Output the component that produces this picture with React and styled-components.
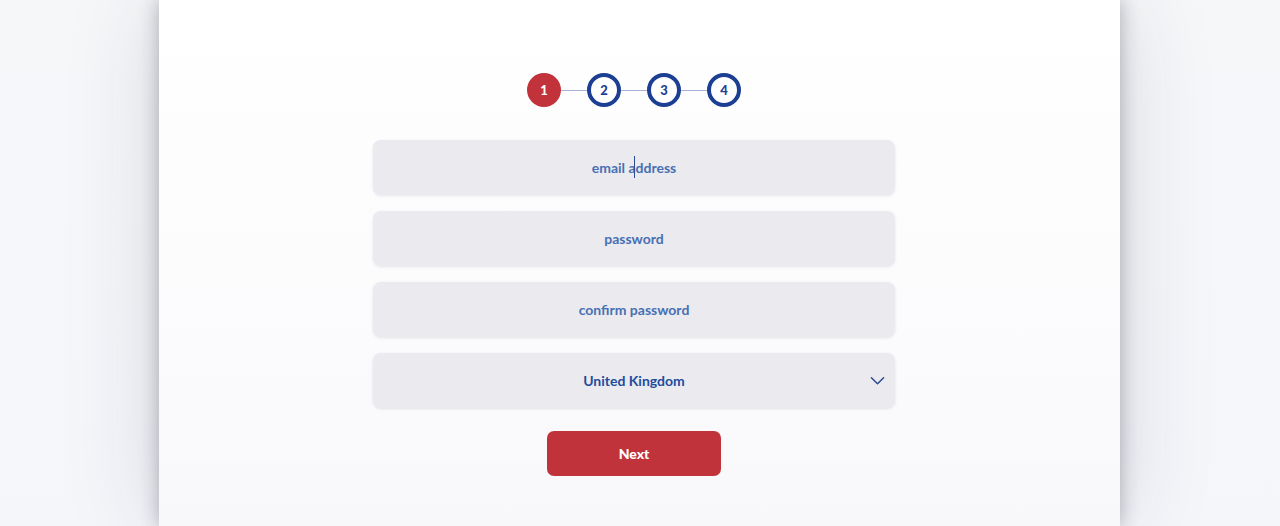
import React, { useState } from "react";
import styled, { createGlobalStyle } from "styled-components";

const GlobalStyle = createGlobalStyle`
  html, body {
    margin: 0;
    padding: 0;
    background: #f5f6f9;
    font-family: "Lato", "Noto Sans", sans-serif;
  }
  * { box-sizing: border-box; }
`;

const steps = [1, 2, 3, 4];

function App() {
  const [email, setEmail] = useState("");
  const [password, setPassword] = useState("");
  const [confirm, setConfirm] = useState("");
  const [country, setCountry] = useState("United Kingdom");

  return (
    <PageWrapper>
      <GlobalStyle />
      <Panel>
        <Content>
          <Stepper>
            {steps.map((step, i) => (
              <React.Fragment key={step}>
                {i > 0 ? <StepLine /> : null}
                <StepCircle active={step === 1}>{step}</StepCircle>
              </React.Fragment>
            ))}
          </Stepper>

          <Form onSubmit={(e) => e.preventDefault()}>
            <FieldWrap>
              <Field
                placeholder="email address"
                value={email}
                onChange={(e) => setEmail(e.target.value)}
              />
              {!email ? <Caret /> : null}
            </FieldWrap>
            <FieldWrap>
              <Field
                type="password"
                placeholder="password"
                value={password}
                onChange={(e) => setPassword(e.target.value)}
              />
            </FieldWrap>
            <FieldWrap>
              <Field
                type="password"
                placeholder="confirm password"
                value={confirm}
                onChange={(e) => setConfirm(e.target.value)}
              />
            </FieldWrap>
            <FieldWrap>
              <Select value={country} onChange={(e) => setCountry(e.target.value)}>
                <option>United Kingdom</option>
                <option>Ireland</option>
                <option>France</option>
              </Select>
              <Chevron viewBox="0 0 16 10" aria-hidden="true">
                <path d="M1.5 1.5 L8 8 L14.5 1.5" fill="none" stroke="#2a4a8f" strokeWidth="1.6" strokeLinecap="round" strokeLinejoin="round" />
              </Chevron>
            </FieldWrap>
            <NextButton type="submit">Next</NextButton>
          </Form>
        </Content>
      </Panel>
    </PageWrapper>
  );
}

const PageWrapper = styled.div`
  width: 100%;
  min-height: 526px;
  display: flex;
  justify-content: center;
  padding-right: 1px;
  overflow: hidden;
  background: linear-gradient(180deg, #f6f7f9 0%, #f5f6fa 100%);
`;

const Panel = styled.div`
  width: 961px;
  min-height: 526px;
  background: linear-gradient(180deg, #ffffff 0%, #fdfcfd 45%, #f8f8fb 100%);
  box-shadow: 0 0 18px rgba(40, 40, 55, 0.32), 0 0 90px rgba(40, 40, 60, 0.15);
  padding-top: 73px;
`;

const Content = styled.div`
  display: flex;
  flex-direction: column;
  align-items: center;
  padding-right: 11px;
`;

const Stepper = styled.div`
  display: flex;
  align-items: center;
  margin-bottom: 33px;
`;

const StepCircle = styled.div`
  width: 34px;
  height: 34px;
  border-radius: 50%;
  display: flex;
  align-items: center;
  justify-content: center;
  font-family: "Lato", sans-serif;
  font-weight: 900;
  font-size: 13px;
  background: ${(p) => (p.active ? "#c2323a" : "#ffffff")};
  color: ${(p) => (p.active ? "#ffffff" : "#1c3f93")};
  border: ${(p) => (p.active ? "none" : "4px solid #1c3f93")};
`;

const StepLine = styled.div`
  width: 26px;
  height: 1px;
  background: #a9b1da;
`;

const Form = styled.form`
  display: flex;
  flex-direction: column;
  align-items: center;
  gap: 16px;
  width: 522px;
`;

const FieldWrap = styled.div`
  position: relative;
  width: 100%;
`;

const Field = styled.input`
  width: 100%;
  height: 55px;
  border: none;
  border-radius: 8px;
  background: #ebeaee;
  box-shadow: 0 1px 3px rgba(60, 60, 80, 0.12);
  text-align: center;
  font-family: "Lato", sans-serif;
  font-weight: 700;
  font-size: 14px;
  color: #1e4d9d;
  outline: none;
  &::placeholder {
    color: #4770b4;
    opacity: 1;
  }
`;

const Caret = styled.span`
  position: absolute;
  left: 50%;
  top: 16px;
  width: 1px;
  height: 22px;
  background: #2b4d97;
  pointer-events: none;
`;

const Select = styled.select`
  width: 100%;
  height: 55px;
  border: none;
  border-radius: 8px;
  background: #ebeaee;
  box-shadow: 0 1px 3px rgba(60, 60, 80, 0.12);
  text-align: center;
  text-align-last: center;
  appearance: none;
  font-family: "Lato", sans-serif;
  font-weight: 700;
  font-size: 14px;
  color: #1e4d9d;
  outline: none;
`;

const Chevron = styled.svg`
  position: absolute;
  right: 10px;
  top: 23px;
  width: 15px;
  height: 10px;
  pointer-events: none;
`;

const NextButton = styled.button`
  width: 174px;
  height: 45px;
  margin-top: 7px;
  border: none;
  border-radius: 7px;
  background: #c1333a;
  color: #ffffff;
  font-family: "Lato", sans-serif;
  font-weight: 900;
  font-size: 14px;
  cursor: pointer;
`;

export default App;
